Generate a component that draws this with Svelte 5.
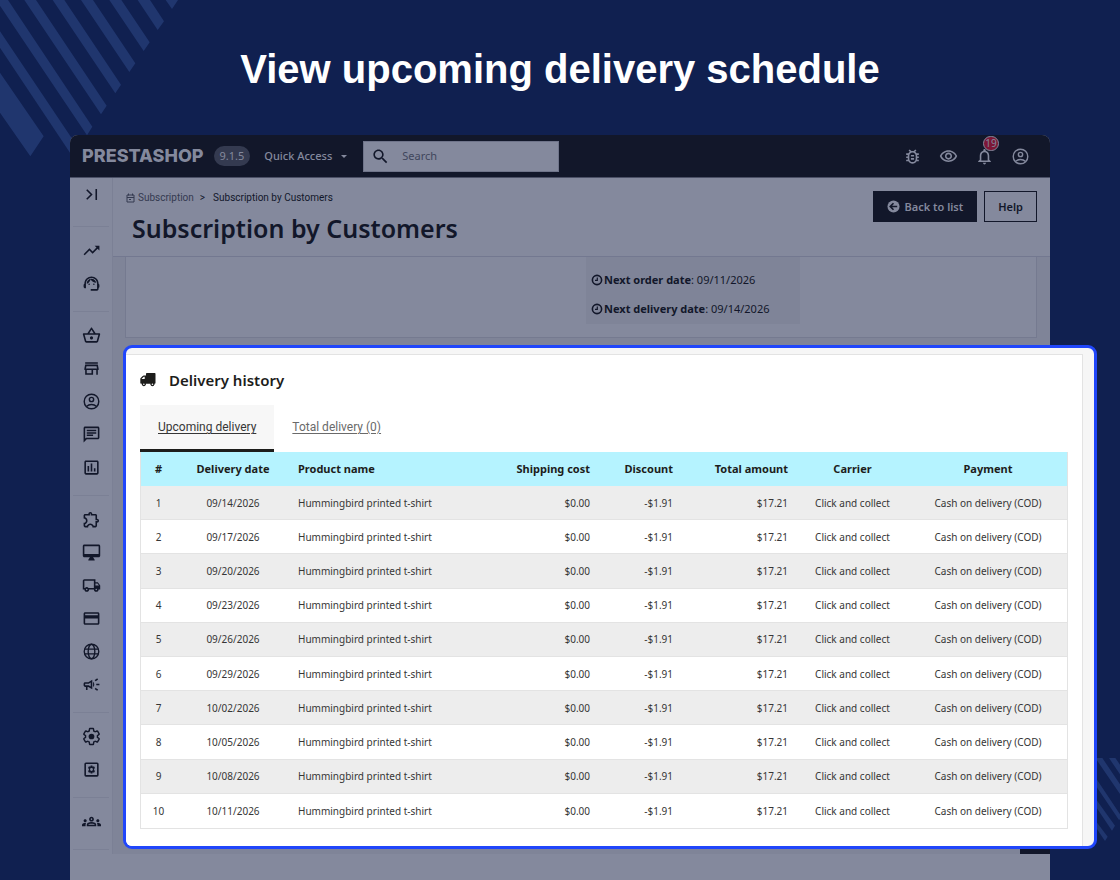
<script>
  const ICONS = {
    trend: 'm16 6 2.29 2.29-4.88 4.88-4-4L2 16.59 3.41 18l6-6 4 4 6.3-6.29L22 12V6z',
    support:
      'M21 12.22C21 6.73 16.74 3 12 3c-4.69 0-9 3.65-9 9.28-.6.34-1 .98-1 1.72v2c0 1.1.9 2 2 2h1v-6.1c0-3.87 3.13-7 7-7s7 3.13 7 7V19h-8v2h8c1.1 0 2-.9 2-2v-1.22c.59-.31 1-.92 1-1.64v-2.3c0-.7-.41-1.31-1-1.62zM8 13a1 1 0 1 0 2 0 1 1 0 1 0-2 0zM14 13a1 1 0 1 0 2 0 1 1 0 1 0-2 0zM18 11.03C17.52 8.18 15.04 6 12.05 6c-3.03 0-6.29 2.51-6.03 6.45 2.47-1.01 4.33-3.21 4.86-5.89 1.31 2.63 4 4.44 7.12 4.47z',
    basket:
      'M22 9h-4.79l-4.38-6.56c-.19-.28-.51-.42-.83-.42s-.64.14-.83.43L6.79 9H2c-.55 0-1 .45-1 1 0 .09.01.18.04.27l2.54 9.27c.23.84 1 1.46 1.92 1.46h13c.92 0 1.69-.62 1.93-1.46l2.54-9.27L23 10c0-.55-.45-1-1-1zM12 4.8 14.8 9H9.2L12 4.8zM18.5 19l-12.99.01L3.31 11H20.7l-2.2 8zM12 13c-1.1 0-2 .9-2 2s.9 2 2 2 2-.9 2-2-.9-2-2-2z',
    store:
      'M18.36 9l.6 3H5.04l.6-3h12.72M20 4H4v2h16V4zm0 3H4l-1 5v2h1v6h10v-6h4v6h2v-6h1v-2l-1-5zM6 18v-4h6v4H6z',
    chat: 'M4 4h16v12H5.17L4 17.17V4m0-2c-1.1 0-1.99.9-1.99 2L2 22l4-4h14c1.1 0 2-.9 2-2V4c0-1.1-.9-2-2-2H4zm2 10h8v2H6v-2zm0-3h12v2H6V9zm0-3h12v2H6V6z',
    stats:
      'M19 3H5c-1.1 0-2 .9-2 2v14c0 1.1.9 2 2 2h14c1.1 0 2-.9 2-2V5c0-1.1-.9-2-2-2zm0 16H5V5h14v14zM7 10h2v7H7zm4-3h2v10h-2zm4 6h2v4h-2z',
    puzzle:
      'M10.5 4.5c.28 0 .5.22.5.5v2h6v6h2c.28 0 .5.22.5.5s-.22.5-.5.5h-2v6h-2.12c-.68-1.75-2.39-3-4.38-3s-3.7 1.25-4.38 3H4v-2.12c1.75-.68 3-2.39 3-4.38 0-1.99-1.24-3.7-2.99-4.38L4 7h6V5c0-.28.22-.5.5-.5m0-2C9.12 2.5 8 3.62 8 5H4c-1.1 0-1.99.9-1.99 2v3.8h.29c1.49 0 2.7 1.21 2.7 2.7s-1.21 2.7-2.7 2.7H2V20c0 1.1.9 2 2 2h3.8v-.3c0-1.49 1.21-2.7 2.7-2.7s2.7 1.21 2.7 2.7v.3H17c1.1 0 2-.9 2-2v-4c1.38 0 2.5-1.12 2.5-2.5S20.38 11 19 11V7c0-1.1-.9-2-2-2h-4c0-1.38-1.12-2.5-2.5-2.5z',
    desktop:
      'M21 2H3c-1.1 0-2 .9-2 2v12c0 1.1.9 2 2 2h7l-2 3v1h8v-1l-2-3h7c1.1 0 2-.9 2-2V4c0-1.1-.9-2-2-2zm0 12H3V4h18v10z',
    shipping:
      'M20 8h-3V4H3c-1.1 0-2 .9-2 2v11h2c0 1.66 1.34 3 3 3s3-1.34 3-3h6c0 1.66 1.34 3 3 3s3-1.34 3-3h2v-5l-3-4zm-.5 1.5 1.96 2.5H17V9.5h2.5zM6 18c-.55 0-1-.45-1-1s.45-1 1-1 1 .45 1 1-.45 1-1 1zm2.22-3c-.55-.61-1.33-1-2.22-1s-1.67.39-2.22 1H3V6h12v9H8.22zM18 18c-.55 0-1-.45-1-1s.45-1 1-1 1 .45 1 1-.45 1-1 1z',
    card: 'M20 4H4c-1.11 0-1.99.89-1.99 2L2 18c0 1.11.89 2 2 2h16c1.11 0 2-.89 2-2V6c0-1.11-.89-2-2-2zm0 14H4v-6h16v6zm0-10H4V6h16v2z',
    campaign:
      'M18 11v2h4v-2h-4zm-2 6.61c.96.71 2.21 1.65 3.2 2.39.4-.53.8-1.07 1.2-1.6-.99-.74-2.24-1.68-3.2-2.4-.4.54-.8 1.08-1.2 1.61zM20.4 5.6c-.4-.53-.8-1.07-1.2-1.6-.99.74-2.24 1.68-3.2 2.4.4.53.8 1.07 1.2 1.6.96-.72 2.21-1.65 3.2-2.4zM4 9c-1.1 0-2 .9-2 2v2c0 1.1.9 2 2 2h1v4h2v-4h1l5 3V6L8 9H4zm5.03 1.71L11 9.53v4.94l-1.97-1.18-.48-.29H4v-2h4.55l.48-.29zM15.5 12c0-1.33-.58-2.53-1.5-3.35v6.69c.92-.81 1.5-2.01 1.5-3.34z',
    groups:
      'M4 13c1.1 0 2-.9 2-2s-.9-2-2-2-2 .9-2 2 .9 2 2 2zm1.13 1.1c-.37-.06-.74-.1-1.13-.1-.99 0-1.93.21-2.78.58C.48 14.9 0 15.62 0 16.43V18h4.5v-1.61c0-.83.23-1.61.63-2.29zM20 13c1.1 0 2-.9 2-2s-.9-2-2-2-2 .9-2 2 .9 2 2 2zm4 3.43c0-.81-.48-1.53-1.22-1.85-.85-.37-1.79-.58-2.78-.58-.39 0-.76.04-1.13.1.4.68.63 1.46.63 2.29V18H24v-1.57zm-7.76-2.78c-1.17-.52-2.61-.9-4.24-.9s-3.07.39-4.24.9C6.68 14.13 6 15.21 6 16.39V18h12v-1.61c0-1.18-.68-2.26-1.76-2.74zM8.07 16c.09-.23.13-.39.91-.69.97-.38 1.99-.56 3.02-.56s2.05.18 3.02.56c.77.3.81.46.91.69H8.07zM12 8c.55 0 1 .45 1 1s-.45 1-1 1-1-.45-1-1 .45-1 1-1m0-2c-1.66 0-3 1.34-3 3s1.34 3 3 3 3-1.34 3-3-1.34-3-3-3z',
    search:
      'M15.5 14h-.79l-.28-.27C15.41 12.59 16 11.11 16 9.5 16 5.91 13.09 3 9.5 3S3 5.91 3 9.5 5.91 16 9.5 16c1.61 0 3.09-.59 4.23-1.57l.27.28v.79l5 4.99L20.49 19l-4.99-5zm-6 0C7.01 14 5 11.99 5 9.5S7.01 5 9.5 5 14 7.01 14 9.5 11.99 14 9.5 14z',
    bug: 'M20 8h-2.81c-.45-.78-1.07-1.45-1.82-1.96L17 4.41 15.59 3l-2.17 2.17C12.96 5.06 12.49 5 12 5s-.96.06-1.41.17L8.41 3 7 4.41l1.62 1.63C7.88 6.55 7.26 7.22 6.81 8H4v2h2.09c-.05.33-.09.66-.09 1v1H4v2h2v1c0 .34.04.67.09 1H4v2h2.81c1.04 1.79 2.97 3 5.19 3s4.15-1.21 5.19-3H20v-2h-2.09c.05-.33.09-.66.09-1v-1h2v-2h-2v-1c0-.34-.04-.67-.09-1H20V8zm-4 7c0 2.21-1.79 4-4 4s-4-1.79-4-4v-4c0-2.21 1.79-4 4-4s4 1.79 4 4v4zm-6-1h4v2h-4v-2zm0-4h4v2h-4v-2z',
    eye: 'M12 6c3.79 0 7.17 2.13 8.82 5.5C19.17 14.87 15.79 17 12 17s-7.17-2.13-8.82-5.5C4.83 8.13 8.21 6 12 6m0-2C7 4 2.73 7.11 1 11.5 2.73 15.89 7 19 12 19s9.27-3.11 11-7.5C21.27 7.11 17 4 12 4zm0 5c1.38 0 2.5 1.12 2.5 2.5S13.38 14 12 14s-2.5-1.12-2.5-2.5S10.62 9 12 9m0-2c-2.48 0-4.5 2.02-4.5 4.5S9.52 16 12 16s4.5-2.02 4.5-4.5S14.48 7 12 7z',
    bell: 'M12 22c1.1 0 2-.9 2-2h-4c0 1.1.9 2 2 2zm6-6v-5c0-3.07-1.63-5.64-4.5-6.32V4c0-.83-.67-1.5-1.5-1.5s-1.5.67-1.5 1.5v.68C7.64 5.36 6 7.92 6 11v5l-2 2v1h16v-1l-2-2zm-2 1H8v-6c0-2.48 1.51-4.5 4-4.5s4 2.02 4 4.5v6z'
  };

  const GEAR =
    'M19.43 12.98c.04-.32.07-.64.07-.98s-.03-.66-.07-.98l2.11-1.65c.19-.15.24-.42.12-.64l-2-3.46c-.09-.16-.26-.25-.44-.25-.06 0-.12.01-.17.03l-2.49 1c-.52-.4-1.08-.73-1.69-.98l-.38-2.65C14.46 2.18 14.25 2 14 2h-4c-.25 0-.46.18-.49.42l-.38 2.65c-.61.25-1.17.59-1.69.98l-2.49-1c-.06-.02-.12-.03-.18-.03-.17 0-.34.09-.43.25l-2 3.46c-.13.22-.07.49.12.64l2.11 1.65c-.04.32-.07.65-.07.98s.03.66.07.98l-2.11 1.65c-.19.15-.24.42-.12.64l2 3.46c.09.16.26.25.44.25.06 0 .12-.01.17-.03l2.49-1c.52.4 1.08.73 1.69.98l.38 2.65c.03.24.24.42.49.42h4c.25 0 .46-.18.49-.42l.38-2.65c.61-.25 1.17-.59 1.69-.98l2.49 1c.06.02.12.03.18.03.17 0 .34-.09.43-.25l2-3.46c.12-.22.07-.49-.12-.64l-2.11-1.65z';

  const groups = [
    [['trend', 'Dashboard'], ['support', 'Support']],
    [['basket', 'Orders'], ['store', 'Catalog'], ['account', 'Customers'], ['chat', 'Customer service'], ['stats', 'Stats']],
    [['puzzle', 'Modules'], ['desktop', 'Design'], ['shipping', 'Shipping'], ['card', 'Payment'], ['globe', 'International'], ['campaign', 'Marketing']],
    [['settings', 'Shop parameters'], ['advanced', 'Advanced parameters']],
    [['groups', 'Subscription']]
  ];

  const dates = [
    '09/14/2026', '09/17/2026', '09/20/2026', '09/23/2026', '09/26/2026',
    '09/29/2026', '10/02/2026', '10/05/2026', '10/08/2026', '10/11/2026'
  ];

  let tab = $state('upcoming');
</script>

{#snippet icon(name)}
  <svg class="icon" viewBox="0 0 24 24" aria-hidden="true">
    {#if name === 'account'}
      <g fill="none" stroke="currentColor" stroke-width="1.800">
        <circle cx="12" cy="12" r="9.200" />
        <circle cx="12" cy="9.500" r="2.700" />
        <path d="M5.600 18.200c1.800-1.600 4-2.400 6.400-2.400s4.600.8 6.400 2.400" />
      </g>
    {:else if name === 'globe'}
      <g fill="none" stroke="currentColor" stroke-width="1.700">
        <circle cx="12" cy="12" r="9.200" />
        <ellipse cx="12" cy="12" rx="4.200" ry="9.200" />
        <path d="M3.500 9h17M3.500 15h17" />
      </g>
    {:else if name === 'settings'}
      <path d={GEAR} fill="none" stroke="currentColor" stroke-width="1.800" />
      <circle cx="12" cy="12" r="3.600" />
    {:else if name === 'advanced'}
      <rect x="4" y="4" width="16" height="16" rx="1" fill="none" stroke="currentColor" stroke-width="2" />
      <path fill-rule="evenodd" d="M10.900 6.800h2.200l.4 1.700 1.700-.5 1.100 1.900L15.100 12l1.200 2.100-1.100 1.900-1.700-.5-.4 1.700h-2.200l-.4-1.700-1.700.5-1.100-1.900L8.900 12 7.700 9.900 8.800 8l1.700.5zM12 10.200a1.800 1.800 0 1 0 0 3.600 1.800 1.800 0 0 0 0-3.600z" />
    {:else}
      <path d={ICONS[name]} />
    {/if}
  </svg>
{/snippet}

{#snippet clock()}
  <svg class="clock" viewBox="0 0 12 12" fill="none" stroke="currentColor" aria-hidden="true">
    <circle cx="6" cy="6" r="4.600" stroke-width="1.600" />
    <path d="M6.300 3.500v2.800H4" stroke-width="1.200" />
  </svg>
{/snippet}

<div class="page">
  <svg class="deco deco-top" viewBox="0 0 540 480" aria-hidden="true">
    <path d="M0 218 131 409 91 469 0 338zM0 94 235 444 218 470 0 143zM0 0H24L277 380 261 406 0 17zM73 0H108L320 317 303 343zM158 0H193L363 254 346 280zM243 0H279L406 190 388 216zM328 0H364L449 127 431 153zM413 0H450L492 64 473 90zM497 0H534L516 27z" />
  </svg>
  <svg class="deco deco-bottom" viewBox="0 0 96 252" aria-hidden="true">
    <path d="M0 158 59 236 51 249 0 173zM0 90 81 203 72 218 0 111zM0 25 96 169V184L93 186 0 49zM22 0H43L96 79V108zM63 0H82L96 20V49z" />
  </svg>

  <h2 class="headline">View upcoming delivery schedule</h2>

  <div class="window">
    <header class="topbar">
      <span class="logo">PRESTASHOP</span>
      <span class="version">9.1.5</span>
      <button class="quick" type="button">Quick Access <i class="caret"></i></button>
      <label class="search">
        {@render icon('search')}
        <input type="text" placeholder="Search" aria-label="Search" />
      </label>
      <nav class="tools" aria-label="Tools">
        <button type="button" aria-label="Debug">{@render icon('bug')}</button>
        <button type="button" aria-label="View shop">{@render icon('eye')}</button>
        <button type="button" aria-label="Notifications">{@render icon('bell')}<span class="count">19</span></button>
        <button type="button" aria-label="Account">{@render icon('account')}</button>
      </nav>
    </header>

    <div class="body">
      <nav class="sidebar" aria-label="Main menu">
        <button class="toggle" type="button" aria-label="Expand menu">
          <svg class="icon" viewBox="0 0 24 24" fill="none" stroke="currentColor" stroke-width="2" aria-hidden="true">
            <path d="m6 6 6 6-6 6M18 5v14" />
          </svg>
        </button>
        {#each groups as group}
          <ul>
            {#each group as [name, label]}
              <li><a href="#{name}" aria-label={label}>{@render icon(name)}</a></li>
            {/each}
          </ul>
        {/each}
      </nav>

      <main>
        <div class="pagehead">
          <div>
            <nav class="crumbs" aria-label="Breadcrumb">
              <svg class="cal" viewBox="0 0 9 10" fill="none" stroke="currentColor" aria-hidden="true">
                <path d="M1 2h7v7H1zM1 4.500h7M2.500.5v2M6.500.5v2" />
                <path d="M3 6.500h2" />
              </svg>
              <a href="#subscription">Subscription</a>
              <span class="sep">&gt;</span>
              <span class="here">Subscription by Customers</span>
            </nav>
            <h1>Subscription by Customers</h1>
          </div>
          <div class="actions">
            <button class="back" type="button">
              <svg viewBox="0 0 14 14" aria-hidden="true">
                <circle cx="7" cy="7" r="6.500" fill="currentColor" />
                <path d="M11 7H4M7 3.500 3.500 7 7 10.500" fill="none" stroke="#12172a" stroke-width="1.800" />
              </svg>
              Back to list
            </button>
            <button class="help" type="button">Help</button>
          </div>
        </div>

        <section class="summary">
          <div class="next">
            <p>{@render clock()}<b>Next order date</b>: 09/11/2026</p>
            <p>{@render clock()}<b>Next delivery date</b>: 09/14/2026</p>
          </div>
        </section>

        <section class="spotlight">
          <div class="panel">
            <h3>
              <svg viewBox="0 0 16 14" aria-hidden="true">
                <path fill-rule="evenodd" d="M6 .8Q6 0 6.800 0H14.700q.8 0 .8.800V10q0 .8-.8.800H14.400A2 2 0 0 1 10.500 10.800H5.800A2 2 0 0 1 1.900 10.800H1.200Q.3 10.800.3 10V5.800Q.3 5.300.7 4.900L2.700 2.900Q3.100 2.500 3.700 2.500H6zM1.700 6H4.700V3.700H3.800L1.700 5.800z" />
                <circle cx="3.850" cy="11.300" r="1.900" />
                <circle cx="12.450" cy="11.300" r="1.900" />
                <circle cx="3.850" cy="11.300" r=".8" fill="#fff" />
                <circle cx="12.450" cy="11.300" r=".8" fill="#fff" />
              </svg>
              Delivery history
            </h3>
            <div class="tabs" role="tablist">
              <button type="button" role="tab" aria-selected={tab === 'upcoming'} class:active={tab === 'upcoming'} onclick={() => (tab = 'upcoming')}>Upcoming delivery</button>
              <button type="button" role="tab" aria-selected={tab === 'total'} class:active={tab === 'total'} onclick={() => (tab = 'total')}>Total delivery (0)</button>
            </div>
            <table>
              <colgroup>
                <col class="c-num" /><col class="c-date" /><col /><col class="c-ship" />
                <col class="c-disc" /><col class="c-total" /><col class="c-carrier" /><col class="c-pay" />
              </colgroup>
              <thead>
                <tr>
                  <th>#</th>
                  <th>Delivery date</th>
                  <th class="left">Product name</th>
                  <th class="right">Shipping cost</th>
                  <th class="right">Discount</th>
                  <th class="right">Total amount</th>
                  <th>Carrier</th>
                  <th>Payment</th>
                </tr>
              </thead>
              <tbody>
                {#each dates as date, i}
                  <tr>
                    <td>{i + 1}</td>
                    <td>{date}</td>
                    <td class="left">Hummingbird printed t-shirt</td>
                    <td class="right">$0.00</td>
                    <td class="right">-$1.91</td>
                    <td class="right">$17.21</td>
                    <td>Click and collect</td>
                    <td>Cash on delivery (COD)</td>
                  </tr>
                {/each}
              </tbody>
            </table>
          </div>
        </section>
        <div class="corner"></div>
      </main>
    </div>
  </div>
</div>

<style>
  :global(body) {
    margin: 0;
    background: #102050;
  }

  * {
    box-sizing: border-box;
  }

  .page {
    position: relative;
    display: flex;
    flex-direction: column;
    min-height: 100vh;
    overflow: hidden;
    background: #102050;
    font-family: 'Noto Sans', sans-serif;
    font-size: 11px;
    line-height: 16px;
    color: #12172a;
  }

  .deco {
    position: absolute;
    fill: #20366e;
  }

  .deco-top {
    top: 0;
    left: 0;
    width: 180px;
    height: 160px;
  }

  .deco-bottom {
    right: 0;
    bottom: 38px;
    width: 32px;
    height: 84px;
  }

  .headline {
    position: relative;
    margin: 0;
    padding: 45px 0 42px;
    font: 700 40px/48px 'Liberation Sans', Arial, sans-serif;
    text-align: center;
    color: #fff;
  }

  button {
    padding: 0;
    border: 0;
    background: none;
    font: inherit;
    color: inherit;
    cursor: pointer;
  }

  .window {
    position: relative;
    flex: 1;
    margin: 0 70px;
    border-radius: 8px 8px 0 0;
    background: #84899d;
  }

  .icon {
    display: block;
    flex: none;
    width: 19px;
    height: 19px;
    fill: currentColor;
  }

  .topbar {
    display: flex;
    align-items: center;
    height: 43px;
    padding: 0 20px 0 12px;
    border-bottom: 1px solid #4b5066;
    border-radius: 8px 8px 0 0;
    background: #12172a;
    color: #84899d;
  }

  .logo {
    font: 800 18px/20px Inter, sans-serif;
  }

  .version {
    margin-left: 10px;
    padding: 0 6px;
    border-radius: 10px;
    background: #343a50;
    line-height: 20px;
  }

  .quick {
    display: flex;
    align-items: center;
    margin-left: 14px;
    font-weight: 500;
  }

  .caret {
    margin-left: 9px;
    border: 3px solid transparent;
    border-top-color: currentColor;
    border-bottom: 0;
  }

  .search {
    display: flex;
    align-items: center;
    width: 196px;
    height: 31px;
    margin-left: 16px;
    padding: 0 7px;
    border: 1px solid #6f748a;
    background: #84899d;
    color: #12172a;
  }

  .search input {
    flex: 1;
    min-width: 0;
    margin-left: 12px;
    padding: 0;
    border: 0;
    outline: 0;
    background: none;
    font: inherit;
  }

  .search input::placeholder {
    color: #40465c;
    opacity: 1;
  }

  .tools {
    display: flex;
    gap: 17px;
    margin-left: auto;
  }

  .tools button {
    position: relative;
  }

  .count {
    position: absolute;
    top: -11px;
    left: 8px;
    width: 16px;
    border: 1px solid #84899d;
    border-radius: 8px;
    background: #7c1736;
    font-size: 10px;
    line-height: 13px;
  }

  .body {
    display: flex;
  }

  .sidebar {
    flex: none;
    width: 43px;
    padding: 0 3px;
    border-right: 1px solid #7b8095;
  }

  .sidebar ul,
  .toggle {
    border-bottom: 1px solid #7b8095;
  }

  .toggle {
    display: flex;
    justify-content: center;
    width: 100%;
    height: 49px;
    padding-top: 7px;
  }

  .toggle .icon {
    fill: none;
  }

  .sidebar ul {
    margin: 0;
    padding: 7px 0 11px;
    list-style: none;
  }

  .sidebar a {
    display: flex;
    align-items: center;
    justify-content: center;
    height: 33px;
    color: #12172a;
  }

  main {
    flex: 1;
    min-width: 0;
    background: #7f8498;
  }

  .pagehead {
    display: flex;
    justify-content: space-between;
    padding: 12px 13px;
    border-bottom: 1px solid #737890;
    background: #84899d;
  }

  .crumbs {
    display: flex;
    align-items: center;
    font-family: Roboto, sans-serif;
    font-size: 10px;
  }

  .cal {
    width: 9px;
    height: 10px;
    margin-right: 3px;
    color: #343a50;
  }

  .crumbs a {
    color: #343a50;
    text-decoration: none;
  }

  .sep {
    margin: 0 8px 0 6px;
  }

  h1 {
    margin: 6px 0 0 6px;
    font-size: 25px;
    font-weight: 600;
    line-height: 32px;
  }

  .actions {
    display: flex;
    align-items: flex-start;
    gap: 7px;
  }

  .actions button {
    display: flex;
    align-items: center;
    gap: 4px;
    height: 31px;
    margin-top: 1px;
    padding: 0 13px;
    border: 1px solid #12172a;
    font-weight: 600;
  }

  .actions svg {
    width: 13px;
    height: 13px;
  }

  .actions .back {
    background: #12172a;
    color: #84899d;
  }

  .summary {
    display: grid;
    grid-template-columns: 1fr 1fr;
    margin: 0 13px 0 12px;
    padding-bottom: 13px;
    border: 1px solid #757a90;
    border-top: 0;
    background: #84899d;
  }

  .next {
    grid-column: 2;
    width: 214px;
    margin-left: 5px;
    padding: 15px 5px 7px;
    background: #7f8498;
  }

  .next p {
    display: flex;
    align-items: center;
    margin: 0;
    white-space: pre;
  }

  .next p + p {
    margin-top: 13px;
  }

  .clock {
    width: 12px;
    height: 12px;
    margin-right: 1px;
  }

  .spotlight {
    position: relative;
    margin: 7px -47px 0 10px;
    padding: 6px 11px 0 0;
    overflow: hidden;
    border: 3px solid #2046fb;
    border-radius: 9px;
    background: #f6f6f6;
    color: #1d1d1b;
  }

  .panel {
    padding: 15px 14px 17px;
    border: 1px solid #e3e3e3;
    border-width: 1px 1px 0 0;
    background: #fff;
  }

  h3 {
    display: flex;
    align-items: center;
    gap: 13px;
    margin: 0 0 15px;
    font-size: 15px;
    font-weight: 600;
    line-height: 20px;
  }

  h3 svg {
    width: 16px;
    height: 14px;
    fill: currentColor;
  }

  .tabs {
    display: flex;
  }

  .tabs button {
    height: 47px;
    padding: 0 18px;
    border-bottom: 3px solid transparent;
    font-family: Roboto, sans-serif;
    font-size: 12px;
    text-decoration: underline;
    text-underline-offset: 2px;
    color: #6a6a6a;
  }

  .tabs .active {
    border-color: #1d1d1b;
    background: #f7f7f7;
    color: #363636;
  }

  table {
    width: 100%;
    height: 377px;
    table-layout: fixed;
    border: 1px solid #e3e3e3;
    border-top: 0;
    border-spacing: 0;
    font-size: 10px;
  }

  .c-num { width: 35px; }
  .c-date { width: 114px; }
  .c-ship { width: 109px; }
  .c-disc { width: 83px; }
  .c-total { width: 115px; }
  .c-carrier { width: 113px; }
  .c-pay { width: 158px; }

  th,
  td {
    height: 34px;
    padding: 0 8px;
    text-align: center;
    white-space: nowrap;
  }

  th {
    background: #b5f3ff;
    font-size: 11px;
    font-weight: 700;
  }

  tbody tr:nth-child(odd) td {
    background: #ededed;
  }

  td {
    border-bottom: 1px solid #e3e3e3;
    color: #363636;
  }

  tbody tr:last-child td {
    border-bottom: 0;
  }

  .left {
    text-align: left;
  }

  .right {
    text-align: right;
  }

  .corner {
    width: 30px;
    height: 5px;
    margin-left: auto;
    background: #12172a;
  }
</style>
